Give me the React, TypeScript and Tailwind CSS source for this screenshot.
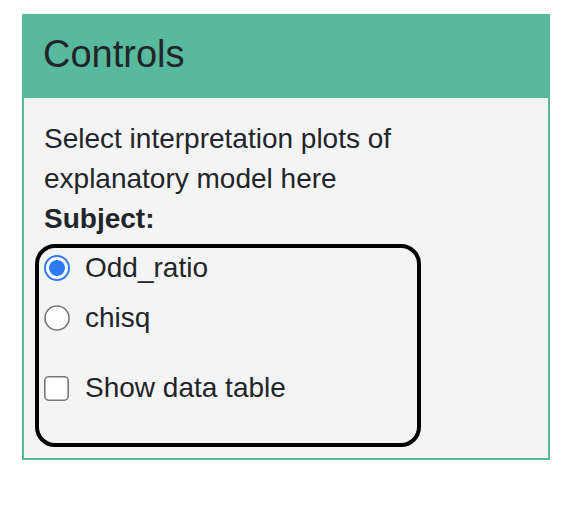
import React from "react";

function RadioOn() {
  return (
    <svg width="26" height="26" viewBox="0 0 26 26" className="shrink-0">
      <circle cx="13" cy="13" r="12" fill="#ffffff" stroke="#2f7bf5" strokeWidth="2" />
      <circle cx="13" cy="13" r="8" fill="#2f7bf5" />
    </svg>
  );
}

function RadioOff() {
  return (
    <svg width="26" height="26" viewBox="0 0 26 26" className="shrink-0">
      <circle cx="13" cy="13" r="12" fill="#ffffff" stroke="#767676" strokeWidth="1.6" />
    </svg>
  );
}

function CheckboxOff() {
  return (
    <svg width="25" height="25" viewBox="0 0 25 25" className="shrink-0">
      <rect x="0.8" y="0.8" width="23.4" height="23.4" rx="4" fill="#ffffff" stroke="#767676" strokeWidth="1.6" />
    </svg>
  );
}

export default function App() {
  return (
    <div
      className="w-[580px] h-[524px] bg-white pt-[14px] pl-[22px]"
      style={{ fontFamily: '"Liberation Sans", Arial, Helvetica, sans-serif' }}
    >
      <div className="w-[528px] border-2 border-[#59b99c] bg-[#f4f4f4] text-[#212529]">
        <div className="h-[82px] bg-[#59b99c] pl-[19px] pt-[18px]">
          <h3 className="text-[38px] leading-[40px] font-normal">Controls</h3>
        </div>
        <div className="pl-[20px] pt-[21px] pb-[11px] text-[28px] leading-[40px]">
          <p>
            Select interpretation plots of
            <br />
            explanatory model here
          </p>
          <div className="font-bold">Subject:</div>
          <div className="mt-[5px] -ml-[9px] w-[386px] h-[203px] rounded-[20px] border-4 border-black pl-[5px]">
            <div className="flex items-center h-[40px] gap-[15px]">
              <RadioOn />
              <span>Odd_ratio</span>
            </div>
            <div className="flex items-center h-[40px] gap-[15px] mt-[10px]">
              <RadioOff />
              <span>chisq</span>
            </div>
            <div className="flex items-center h-[40px] gap-[16px] mt-[30px]">
              <CheckboxOff />
              <span>Show data table</span>
            </div>
          </div>
        </div>
      </div>
    </div>
  );
}
